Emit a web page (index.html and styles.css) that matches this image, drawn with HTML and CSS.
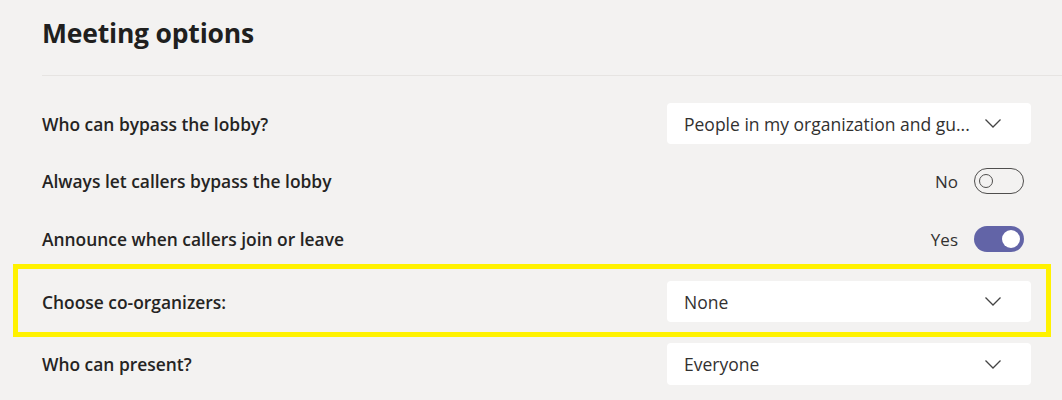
FILE: index.html
```html
<!DOCTYPE html>
<html lang="en">
<head>
<meta charset="utf-8">
<title>Meeting options</title>
<link rel="stylesheet" href="styles.css">
</head>
<body>
<main class="page">
  <h1 class="title">Meeting options</h1>
  <div class="divider"></div>
  <div class="rows">
    <div class="row row-1">
      <span class="label">Who can bypass the lobby?</span>
      <div class="select">
        <span class="value">People in my organization and gu...</span>
        <svg class="chev" viewBox="0 0 16 9" width="16" height="9"><path d="M0.5 0.5 L8 8 L15.5 0.5" fill="none" stroke="#444" stroke-width="1.3"/></svg>
      </div>
    </div>
    <div class="row row-2">
      <span class="label">Always let callers bypass the lobby</span>
      <div class="toggle-wrap">
        <span class="state">No</span>
        <span class="toggle off"><span class="knob"></span></span>
      </div>
    </div>
    <div class="row row-3">
      <span class="label">Announce when callers join or leave</span>
      <div class="toggle-wrap">
        <span class="state">Yes</span>
        <span class="toggle on"><span class="knob"></span></span>
      </div>
    </div>
    <div class="row row-4 highlighted">
      <span class="label">Choose co-organizers:</span>
      <div class="select">
        <span class="value">None</span>
        <svg class="chev" viewBox="0 0 16 9" width="16" height="9"><path d="M0.5 0.5 L8 8 L15.5 0.5" fill="none" stroke="#444" stroke-width="1.3"/></svg>
      </div>
    </div>
    <div class="row row-5">
      <span class="label">Who can present?</span>
      <div class="select">
        <span class="value">Everyone</span>
        <svg class="chev" viewBox="0 0 16 9" width="16" height="9"><path d="M0.5 0.5 L8 8 L15.5 0.5" fill="none" stroke="#444" stroke-width="1.3"/></svg>
      </div>
    </div>
  </div>
</main>
</body>
</html>
```
FILE: styles.css
```css
html, body {
  margin: 0;
  padding: 0;
  background: #f3f2f1;
  height: 400px;
  overflow: hidden;
}
.page {
  padding: 15px 31px 0 42px;
  font-family: "Open Sans", "Noto Sans", sans-serif;
  color: #252423;
}
.title {
  margin: 0;
  font-size: 26.5px;
  font-weight: 700;
  line-height: 36px;
  letter-spacing: -0.2px;
  color: #201f1e;
}
.divider {
  height: 1px;
  background: #e6e4e2;
  margin: 24px -31px 0 0;
}
.rows {
  display: flex;
  flex-direction: column;
}
.row {
  display: flex;
  align-items: center;
  justify-content: space-between;
  position: relative;
}
.row-1 { margin-top: 27px; height: 41px; }
.row-2 { margin-top: 24px; height: 26px; }
.row-3 { margin-top: 32px; height: 26px; }
.row-4 { margin-top: 29px; height: 41px; }
.row-5 { margin-top: 21px; height: 42px; }
.label {
  font-size: 17.4px;
  font-weight: 600;
  color: #252423;
}
.select {
  width: 364px;
  height: 100%;
  box-sizing: border-box;
  background: #ffffff;
  border-radius: 4px;
  display: flex;
  align-items: center;
  justify-content: space-between;
  padding: 0 30px 0 17px;
}
.value {
  font-size: 17.5px;
  color: #323130;
}
.chev { display: block; }
.toggle-wrap {
  display: flex;
  align-items: center;
  gap: 16px;
  margin-right: 7px;
}
.state {
  font-size: 17px;
  color: #323130;
}
.toggle {
  width: 50px;
  height: 26px;
  box-sizing: border-box;
  border-radius: 13px;
  display: flex;
  align-items: center;
}
.toggle.off {
  border: 1.5px solid #4f4e4d;
  padding-left: 4px;
}
.toggle.off .knob {
  width: 14px;
  height: 14px;
  border: 1.5px solid #4f4e4d;
  border-radius: 50%;
  box-sizing: border-box;
}
.toggle.on {
  background: #6264a7;
  justify-content: flex-end;
  padding-right: 4px;
}
.toggle.on .knob {
  width: 18px;
  height: 18px;
  border-radius: 50%;
  background: #ffffff;
}
.highlighted::after {
  content: "";
  position: absolute;
  top: -17px;
  bottom: -15px;
  left: -29px;
  right: -20px;
  border: 5px solid #fff200;
  pointer-events: none;
}
```
